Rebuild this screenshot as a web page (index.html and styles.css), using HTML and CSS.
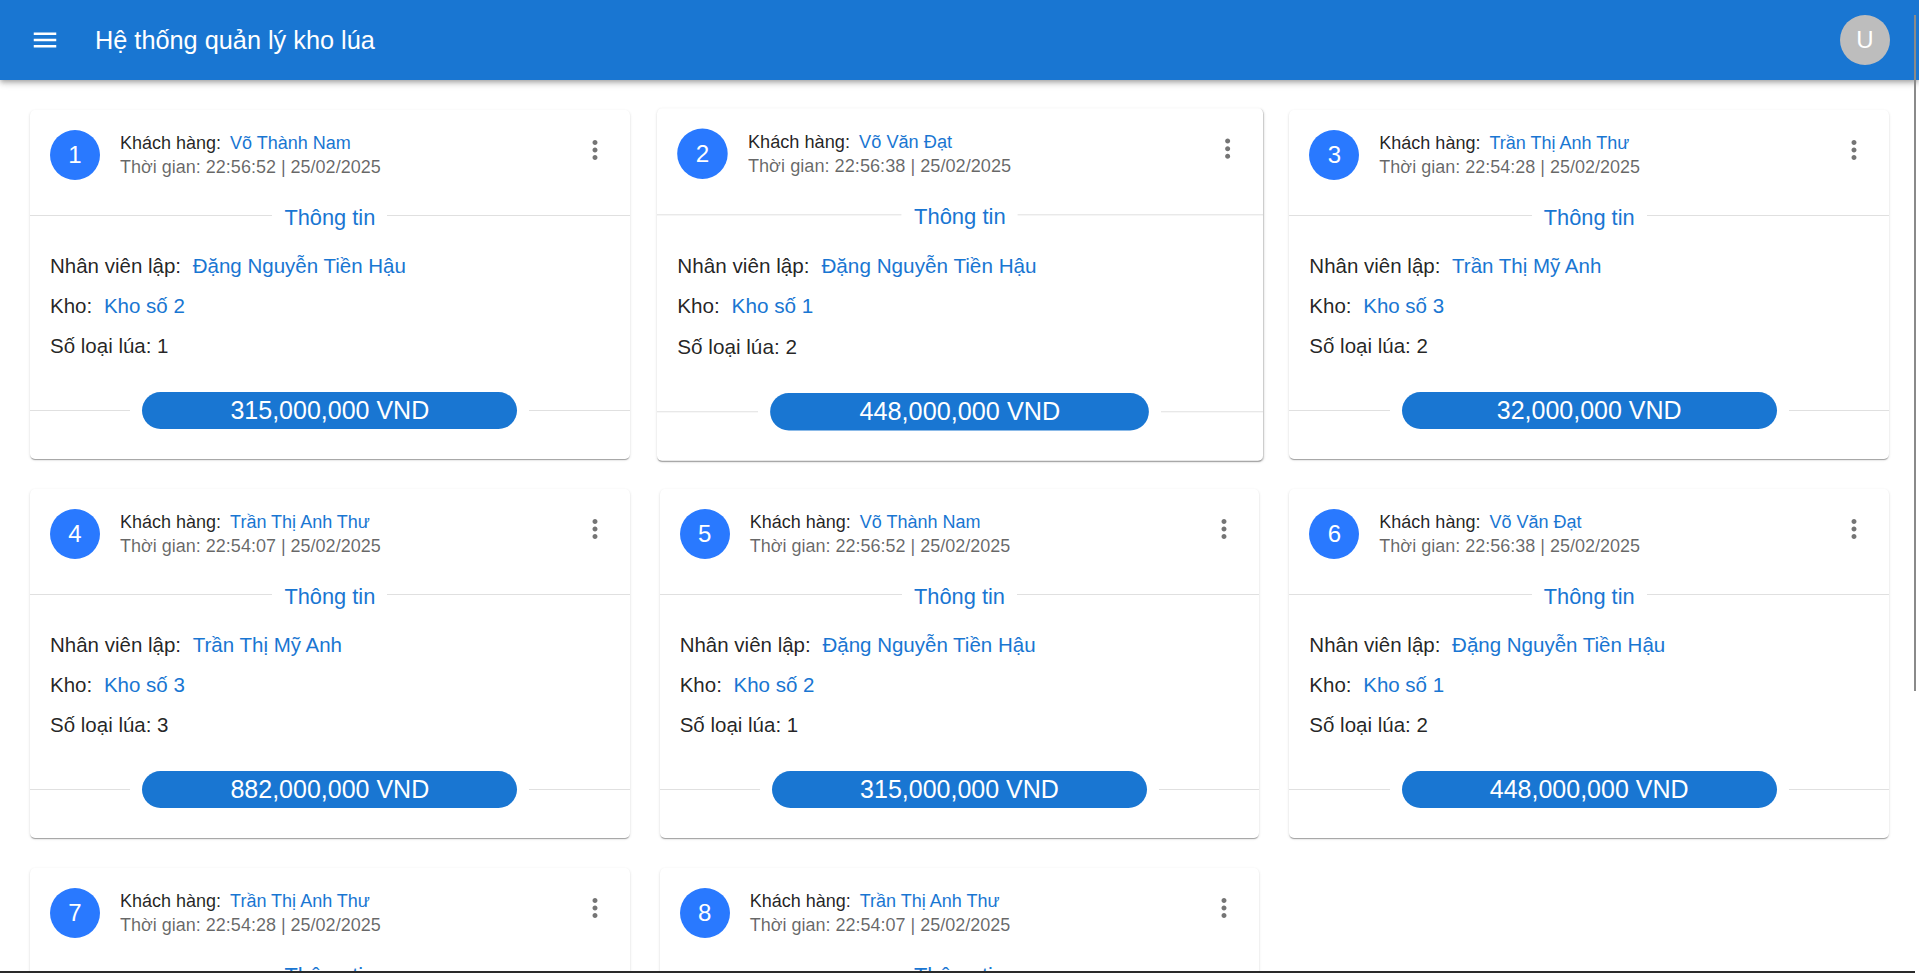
FILE: index.html
```html
<!DOCTYPE html>
<html lang="vi">
<head>
<meta charset="utf-8">
<title>Hệ thống quản lý kho lúa</title>
<link rel="stylesheet" href="styles.css">
</head>
<body>
<header class="appbar">
  <button class="menu-btn" aria-label="menu">
    <svg viewBox="0 0 24 24" width="30" height="30"><path fill="#fff" d="M3 18h18v-2H3zm0-5h18v-2H3zm0-7v2h18V6z"/></svg>
  </button>
  <h1 class="app-title">Hệ thống quản lý kho lúa</h1>
  <div class="user-avatar">U</div>
</header>

<main class="grid">
  <article class="card">
    <div class="card-head">
      <div class="num">1</div>
      <div class="head-text">
        <div class="customer">Khách hàng: <span class="link">Võ Thành Nam</span></div>
        <div class="time">Thời gian: 22:56:52 | 25/02/2025</div>
      </div>
      <svg class="kebab" viewBox="0 0 24 24" width="30" height="30"><path d="M12 8c1.1 0 2-.9 2-2s-.9-2-2-2-2 .9-2 2 .9 2 2 2m0 2c-1.1 0-2 .9-2 2s.9 2 2 2 2-.9 2-2-.9-2-2-2m0 6c-1.1 0-2 .9-2 2s.9 2 2 2 2-.9 2-2-.9-2-2-2"/></svg>
    </div>
    <div class="divider section"><span class="div-title">Thông tin</span></div>
    <div class="info">
      <div class="row">Nhân viên lập: <span class="link">Đặng Nguyễn Tiền Hậu</span></div>
      <div class="row">Kho: <span class="link">Kho số 2</span></div>
      <div class="row">Số loại lúa: 1</div>
    </div>
    <div class="divider total"><span class="pill">315,000,000 VND</span></div>
  </article>

  <article class="card hovered">
    <div class="card-head">
      <div class="num">2</div>
      <div class="head-text">
        <div class="customer">Khách hàng: <span class="link">Võ Văn Đạt</span></div>
        <div class="time">Thời gian: 22:56:38 | 25/02/2025</div>
      </div>
      <svg class="kebab" viewBox="0 0 24 24" width="30" height="30"><path d="M12 8c1.1 0 2-.9 2-2s-.9-2-2-2-2 .9-2 2 .9 2 2 2m0 2c-1.1 0-2 .9-2 2s.9 2 2 2 2-.9 2-2-.9-2-2-2m0 6c-1.1 0-2 .9-2 2s.9 2 2 2 2-.9 2-2-.9-2-2-2"/></svg>
    </div>
    <div class="divider section"><span class="div-title">Thông tin</span></div>
    <div class="info">
      <div class="row">Nhân viên lập: <span class="link">Đặng Nguyễn Tiền Hậu</span></div>
      <div class="row">Kho: <span class="link">Kho số 1</span></div>
      <div class="row">Số loại lúa: 2</div>
    </div>
    <div class="divider total"><span class="pill">448,000,000 VND</span></div>
  </article>

  <article class="card">
    <div class="card-head">
      <div class="num">3</div>
      <div class="head-text">
        <div class="customer">Khách hàng: <span class="link">Trần Thị Anh Thư</span></div>
        <div class="time">Thời gian: 22:54:28 | 25/02/2025</div>
      </div>
      <svg class="kebab" viewBox="0 0 24 24" width="30" height="30"><path d="M12 8c1.1 0 2-.9 2-2s-.9-2-2-2-2 .9-2 2 .9 2 2 2m0 2c-1.1 0-2 .9-2 2s.9 2 2 2 2-.9 2-2-.9-2-2-2m0 6c-1.1 0-2 .9-2 2s.9 2 2 2 2-.9 2-2-.9-2-2-2"/></svg>
    </div>
    <div class="divider section"><span class="div-title">Thông tin</span></div>
    <div class="info">
      <div class="row">Nhân viên lập: <span class="link">Trần Thị Mỹ Anh</span></div>
      <div class="row">Kho: <span class="link">Kho số 3</span></div>
      <div class="row">Số loại lúa: 2</div>
    </div>
    <div class="divider total"><span class="pill">32,000,000 VND</span></div>
  </article>

  <article class="card">
    <div class="card-head">
      <div class="num">4</div>
      <div class="head-text">
        <div class="customer">Khách hàng: <span class="link">Trần Thị Anh Thư</span></div>
        <div class="time">Thời gian: 22:54:07 | 25/02/2025</div>
      </div>
      <svg class="kebab" viewBox="0 0 24 24" width="30" height="30"><path d="M12 8c1.1 0 2-.9 2-2s-.9-2-2-2-2 .9-2 2 .9 2 2 2m0 2c-1.1 0-2 .9-2 2s.9 2 2 2 2-.9 2-2-.9-2-2-2m0 6c-1.1 0-2 .9-2 2s.9 2 2 2 2-.9 2-2-.9-2-2-2"/></svg>
    </div>
    <div class="divider section"><span class="div-title">Thông tin</span></div>
    <div class="info">
      <div class="row">Nhân viên lập: <span class="link">Trần Thị Mỹ Anh</span></div>
      <div class="row">Kho: <span class="link">Kho số 3</span></div>
      <div class="row">Số loại lúa: 3</div>
    </div>
    <div class="divider total"><span class="pill">882,000,000 VND</span></div>
  </article>

  <article class="card">
    <div class="card-head">
      <div class="num">5</div>
      <div class="head-text">
        <div class="customer">Khách hàng: <span class="link">Võ Thành Nam</span></div>
        <div class="time">Thời gian: 22:56:52 | 25/02/2025</div>
      </div>
      <svg class="kebab" viewBox="0 0 24 24" width="30" height="30"><path d="M12 8c1.1 0 2-.9 2-2s-.9-2-2-2-2 .9-2 2 .9 2 2 2m0 2c-1.1 0-2 .9-2 2s.9 2 2 2 2-.9 2-2-.9-2-2-2m0 6c-1.1 0-2 .9-2 2s.9 2 2 2 2-.9 2-2-.9-2-2-2"/></svg>
    </div>
    <div class="divider section"><span class="div-title">Thông tin</span></div>
    <div class="info">
      <div class="row">Nhân viên lập: <span class="link">Đặng Nguyễn Tiền Hậu</span></div>
      <div class="row">Kho: <span class="link">Kho số 2</span></div>
      <div class="row">Số loại lúa: 1</div>
    </div>
    <div class="divider total"><span class="pill">315,000,000 VND</span></div>
  </article>

  <article class="card">
    <div class="card-head">
      <div class="num">6</div>
      <div class="head-text">
        <div class="customer">Khách hàng: <span class="link">Võ Văn Đạt</span></div>
        <div class="time">Thời gian: 22:56:38 | 25/02/2025</div>
      </div>
      <svg class="kebab" viewBox="0 0 24 24" width="30" height="30"><path d="M12 8c1.1 0 2-.9 2-2s-.9-2-2-2-2 .9-2 2 .9 2 2 2m0 2c-1.1 0-2 .9-2 2s.9 2 2 2 2-.9 2-2-.9-2-2-2m0 6c-1.1 0-2 .9-2 2s.9 2 2 2 2-.9 2-2-.9-2-2-2"/></svg>
    </div>
    <div class="divider section"><span class="div-title">Thông tin</span></div>
    <div class="info">
      <div class="row">Nhân viên lập: <span class="link">Đặng Nguyễn Tiền Hậu</span></div>
      <div class="row">Kho: <span class="link">Kho số 1</span></div>
      <div class="row">Số loại lúa: 2</div>
    </div>
    <div class="divider total"><span class="pill">448,000,000 VND</span></div>
  </article>

  <article class="card">
    <div class="card-head">
      <div class="num">7</div>
      <div class="head-text">
        <div class="customer">Khách hàng: <span class="link">Trần Thị Anh Thư</span></div>
        <div class="time">Thời gian: 22:54:28 | 25/02/2025</div>
      </div>
      <svg class="kebab" viewBox="0 0 24 24" width="30" height="30"><path d="M12 8c1.1 0 2-.9 2-2s-.9-2-2-2-2 .9-2 2 .9 2 2 2m0 2c-1.1 0-2 .9-2 2s.9 2 2 2 2-.9 2-2-.9-2-2-2m0 6c-1.1 0-2 .9-2 2s.9 2 2 2 2-.9 2-2-.9-2-2-2"/></svg>
    </div>
    <div class="divider section"><span class="div-title">Thông tin</span></div>
    <div class="info">
      <div class="row">Nhân viên lập: <span class="link">Trần Thị Mỹ Anh</span></div>
      <div class="row">Kho: <span class="link">Kho số 3</span></div>
      <div class="row">Số loại lúa: 2</div>
    </div>
    <div class="divider total"><span class="pill">32,000,000 VND</span></div>
  </article>

  <article class="card">
    <div class="card-head">
      <div class="num">8</div>
      <div class="head-text">
        <div class="customer">Khách hàng: <span class="link">Trần Thị Anh Thư</span></div>
        <div class="time">Thời gian: 22:54:07 | 25/02/2025</div>
      </div>
      <svg class="kebab" viewBox="0 0 24 24" width="30" height="30"><path d="M12 8c1.1 0 2-.9 2-2s-.9-2-2-2-2 .9-2 2 .9 2 2 2m0 2c-1.1 0-2 .9-2 2s.9 2 2 2 2-.9 2-2-.9-2-2-2m0 6c-1.1 0-2 .9-2 2s.9 2 2 2 2-.9 2-2-.9-2-2-2"/></svg>
    </div>
    <div class="divider section"><span class="div-title">Thông tin</span></div>
    <div class="info">
      <div class="row">Nhân viên lập: <span class="link">Trần Thị Mỹ Anh</span></div>
      <div class="row">Kho: <span class="link">Kho số 3</span></div>
      <div class="row">Số loại lúa: 3</div>
    </div>
    <div class="divider total"><span class="pill">882,000,000 VND</span></div>
  </article>
</main>

<div class="scroll-thumb-v"></div>
<div class="scroll-thumb-h"></div>
</body>
</html>
```

FILE: styles.css
```css
html {
  scrollbar-width: none;
}
html::-webkit-scrollbar {
  display: none;
}
body {
  margin: 0;
  background: #fff;
  font-family: "Liberation Sans", Arial, sans-serif;
  color: rgba(0, 0, 0, 0.87);
}

.appbar {
  position: sticky;
  top: 0;
  z-index: 10;
  height: 80px;
  display: flex;
  align-items: center;
  padding: 0 29px 0 30px;
  background: #1976d2;
  color: #fff;
  box-shadow: 0 2px 4px -1px rgba(0,0,0,0.2), 0 4px 5px 0 rgba(0,0,0,0.14), 0 1px 10px 0 rgba(0,0,0,0.12);
}
.menu-btn {
  display: flex;
  padding: 0;
  border: 0;
  background: none;
  width: 30px;
  height: 30px;
}
.app-title {
  margin: 0 0 0 35px;
  font-size: 25.3px;
  font-weight: 400;
  flex: 1;
}
.user-avatar {
  width: 50px;
  height: 50px;
  border-radius: 50%;
  background: #bdbdbd;
  color: #fff;
  display: flex;
  align-items: center;
  justify-content: center;
  font-size: 24px;
}

.grid {
  display: grid;
  grid-template-columns: repeat(3, 1fr);
  column-gap: 30px;
  row-gap: 30px;
  padding: 30px;
}

.card {
  background: #fff;
  border-radius: 5px;
  box-shadow: 0 2px 1px -1px rgba(0,0,0,0.2), 0 1px 1px 0 rgba(0,0,0,0.14), 0 1px 3px 0 rgba(0,0,0,0.12);
  padding-bottom: 30px;
}
.card.hovered {
  transform: scale(1.01);
}

.card-head {
  display: flex;
  align-items: center;
  padding: 20px 20px 0 20px;
}
.num {
  width: 50px;
  height: 50px;
  flex: none;
  border-radius: 50%;
  background: #2979ff;
  color: #fff;
  font-size: 24px;
  display: flex;
  align-items: center;
  justify-content: center;
}
.head-text {
  flex: 1;
  margin-left: 20px;
  font-size: 18px;
  line-height: 24px;
}
.customer .link {
  margin-left: 4px;
}
.row .link {
  margin-left: 6px;
}
.time {
  color: rgba(0, 0, 0, 0.6);
}
.link {
  color: #1976d2;
}
.kebab {
  align-self: flex-start;
  margin-top: 5px;
  fill: #757575;
}

.divider {
  display: flex;
  align-items: center;
}
.divider::before,
.divider::after {
  content: "";
  flex: 1;
  border-top: 1px solid #e0e0e0;
}
.section {
  margin-top: 22px;
}
.div-title {
  padding: 5px 12px 0;
  font-size: 21.8px;
  line-height: 22px;
  color: #1976d2;
}

.info {
  padding: 25px 20px 0 20px;
  display: flex;
  flex-direction: column;
  gap: 16px;
  font-size: 20.5px;
  line-height: 24px;
}

.total {
  margin-top: 34px;
}
.pill {
  width: 375px;
  height: 37px;
  margin: 0 12px;
  border-radius: 19px;
  background: #1976d2;
  color: #fff;
  font-size: 25px;
  display: flex;
  align-items: center;
  justify-content: center;
}

.scroll-thumb-v {
  position: fixed;
  top: 15px;
  right: 3px;
  width: 2px;
  height: 676px;
  background: #8a8a8a;
  z-index: 20;
}
.scroll-thumb-h {
  position: fixed;
  left: 0;
  right: 4px;
  bottom: 0;
  height: 2px;
  background: #2a2a2a;
  z-index: 20;
}
```
